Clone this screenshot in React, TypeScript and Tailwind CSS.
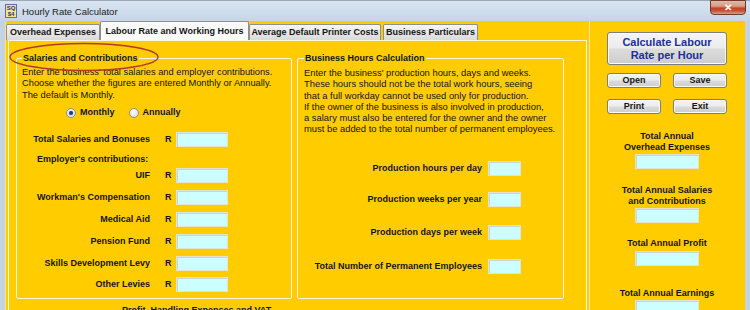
import React from "react";

function Field({ w }: { w: string }) {
  return <div className={`${w} h-[15px] shrink-0 bg-[#ccffff] border border-[#e6e2cf] shadow-[inset_1px_1px_0_#c4d6d6]`} />;
}

function LRow({ label }: { label: string }) {
  return (
    <div className="flex items-center h-[16px]">
      <div className="w-[128px] text-right font-bold whitespace-nowrap">{label}</div>
      <div className="w-[26px] pl-[15px] font-bold">R</div>
      <Field w="w-[52px]" />
    </div>
  );
}

function RRow({ label, mt }: { label: string; mt: string }) {
  return (
    <div className={`flex items-center h-[16px] ${mt}`}>
      <div className="w-[178px] text-right font-bold whitespace-nowrap">{label}</div>
      <div className="w-[6px]" />
      <Field w="w-[33px]" />
    </div>
  );
}

function Btn({ children, cls }: { children: React.ReactNode; cls: string }) {
  return (
    <div
      className={`flex flex-col items-center justify-center rounded-[3px] border border-[#7d7d7d] bg-[linear-gradient(#f4f4f4,#ececec_48%,#dcdcdc_52%,#cdcdcd)] shadow-[inset_0_0_0_1px_#fafafa] font-bold ${cls}`}
    >
      {children}
    </div>
  );
}

function Radio({ on }: { on: boolean }) {
  return (
    <div className="w-[10px] h-[10px] rounded-full border border-[#8e8f8f] bg-[radial-gradient(circle_at_40%_35%,#ffffff,#d8d8d8)] flex items-center justify-center">
      {on && <div className="w-[4px] h-[4px] rounded-full bg-[#1f3f8f] shadow-[0_0_1px_#4060c0]" />}
    </div>
  );
}

export default function App() {
  return (
    <div className="w-[750px] h-[310px] overflow-hidden bg-[#c4d3e4] font-['Liberation_Sans',Arial,sans-serif] text-[9px] leading-[11px] text-[#141414]">
      {/* Title bar */}
      <div className="h-[21px] flex items-center bg-[linear-gradient(#d9e4f0,#c6d5e6)] border-t border-[#9aa7b6]">
        <div className="ml-[5px] w-[12px] h-[14px] bg-[#f4e48a] border border-[#5a6fa8] flex flex-col items-center justify-center leading-[6px] text-[6px] font-bold text-[#1a2f9a]">
          <span>SQ</span>
          <span>$4</span>
        </div>
        <div className="ml-[5px] text-[9.5px] text-[#1b1b1b]">Hourly Rate Calculator</div>
        <div className="flex-1" />
        <div className="self-start -mt-px mr-[4px] w-[36px] h-[15px] rounded-b-[4px] border border-[#6e3a2c] bg-[linear-gradient(#e4b9a2,#d59c85_40%,#c8402b_55%,#c4503a_75%,#d8a287)] flex items-center justify-center text-white text-[10px] font-bold leading-none">
          ✕
        </div>
      </div>

      {/* Window body */}
      <div className="flex h-[289px] px-[5px]">
        <div className="flex-1 bg-[#ffcc00] flex border-l border-[#fce38a]">
          {/* Left: tabs */}
          <div className="flex flex-col w-[583px]">
            <div className="flex items-end h-[20px] pl-[0px]">
              <div className="w-[94px] h-[16px] border border-b-0 border-[#8f8f8f] rounded-t-[2px] bg-[linear-gradient(#f6f6f6,#dadada)] flex items-center justify-center font-bold whitespace-nowrap">
                Overhead Expenses
              </div>
              <div className="w-[149px] h-[19px] border border-b-0 border-[#8f8f8f] rounded-t-[2px] bg-[#fbfbfb] flex items-center justify-center font-bold whitespace-nowrap">
                Labour Rate and Working Hours
              </div>
              <div className="w-[132px] h-[16px] border border-b-0 border-[#8f8f8f] rounded-t-[2px] bg-[linear-gradient(#f6f6f6,#dadada)] flex items-center justify-center font-bold whitespace-nowrap">
                Average Default Printer Costs
              </div>
              <div className="ml-[2px] w-[95px] h-[16px] border border-b-0 border-[#8f8f8f] rounded-t-[2px] bg-[linear-gradient(#f6f6f6,#dadada)] flex items-center justify-center font-bold whitespace-nowrap">
                Business Particulars
              </div>
            </div>

            {/* Tab pane */}
            <div className="relative ml-[2px] w-[579px] flex-1 border border-b-0 border-[#fbf6e4] pt-[12px] pl-[7px]">
              <div className="flex gap-[5px] items-stretch">
                {/* Salaries and Contributions */}
                <fieldset className="w-[276px] border border-[#fbf6e6] rounded-[2px] px-[5px] pb-[5px]">
                  <legend className="px-[1px] font-bold">Salaries and Contributions</legend>
                  <div className="mt-[3px] text-[9.3px] leading-[11.3px]">
                    Enter the business' total salaries and employer contributions.
                    <br />
                    Choose whether the figures are entered Monthly or Annually.
                    <br />
                    The default is Monthly.
                  </div>
                  <div className="mt-[6px] h-[12px] flex items-center pl-[44px] font-bold">
                    <Radio on={true} />
                    <span className="ml-[4px]">Monthly</span>
                    <span className="ml-[14px]">
                      <Radio on={false} />
                    </span>
                    <span className="ml-[4px]">Annually</span>
                  </div>
                  <div className="mt-[13px]">
                    <LRow label="Total Salaries and Bonuses" />
                  </div>
                  <div className="mt-[6px] pl-[15px] font-bold">Employer's contributions:</div>
                  <div className="mt-[3px] flex flex-col gap-[5.8px]">
                    <LRow label="UIF" />
                    <LRow label="Workman's Compensation" />
                    <LRow label="Medical Aid" />
                    <LRow label="Pension Fund" />
                    <LRow label="Skills Development Levy" />
                    <LRow label="Other Levies" />
                  </div>
                </fieldset>

                {/* Business Hours Calculation */}
                <fieldset className="w-[267px] border border-[#fbf6e6] rounded-[2px] px-[6px] pb-[5px]">
                  <legend className="px-[1px] font-bold">Business Hours Calculation</legend>
                  <div className="mt-[3px] text-[9.4px] leading-[11.3px]">
                    Enter the business' production hours, days and weeks.
                    <br />
                    These hours should not be the total work hours, seeing
                    <br />
                    that a full workday cannot be used only for production.
                    <br />
                    If the owner of the business is also involved in production,
                    <br />
                    a salary must also be entered for the owner and the owner
                    <br />
                    must be added to the total number of permanent employees.
                  </div>
                  <RRow label="Production hours per day" mt="mt-[26px]" />
                  <RRow label="Production weeks per year" mt="mt-[15px]" />
                  <RRow label="Production days per week" mt="mt-[17px]" />
                  <RRow label="Total Number of Permanent Employees" mt="mt-[18px]" />
                </fieldset>
              </div>
              <div className="mt-[6px] pl-[106px] font-bold">Profit, Handling Expenses and VAT</div>

              {/* red highlight ellipse */}
              <svg className="absolute left-0 top-0 pointer-events-none" width="170" height="40" viewBox="0 0 170 40">
                <ellipse cx="75" cy="16" rx="74" ry="13.5" fill="none" stroke="#b5382a" strokeWidth="1.4" />
              </svg>
            </div>
          </div>

          {/* Right column */}
          <div className="flex-1 border-l border-[#fbe9a8] pl-[17px] pt-[11px]">
            <div className="w-[120px] flex flex-col items-center">
              <Btn cls="w-[120px] h-[33px] text-[11px] leading-[13px] text-[#1d2f9e]">
                <span>Calculate Labour</span>
                <span>Rate per Hour</span>
              </Btn>
              <div className="mt-[8px] w-[120px] flex justify-between">
                <Btn cls="w-[54px] h-[15px]">Open</Btn>
                <Btn cls="w-[54px] h-[15px]">Save</Btn>
              </div>
              <div className="mt-[11px] w-[120px] flex justify-between">
                <Btn cls="w-[54px] h-[15px]">Print</Btn>
                <Btn cls="w-[54px] h-[15px]">Exit</Btn>
              </div>
              <div className="mt-[17px] text-center font-bold">
                Total Annual
                <br />
                Overhead Expenses
              </div>
              <div className="mt-[1px]">
                <Field w="w-[64px]" />
              </div>
              <div className="mt-[16px] text-center font-bold">
                Total Annual Salaries
                <br />
                and Contributions
              </div>
              <div className="mt-[1px]">
                <Field w="w-[64px]" />
              </div>
              <div className="mt-[15px] text-center font-bold">Total Annual Profit</div>
              <div className="mt-[2px]">
                <Field w="w-[64px]" />
              </div>
              <div className="mt-[22px] text-center font-bold">Total Annual Earnings</div>
              <div className="mt-[1px]">
                <Field w="w-[64px]" />
              </div>
            </div>
          </div>
        </div>
      </div>
    </div>
  );
}
